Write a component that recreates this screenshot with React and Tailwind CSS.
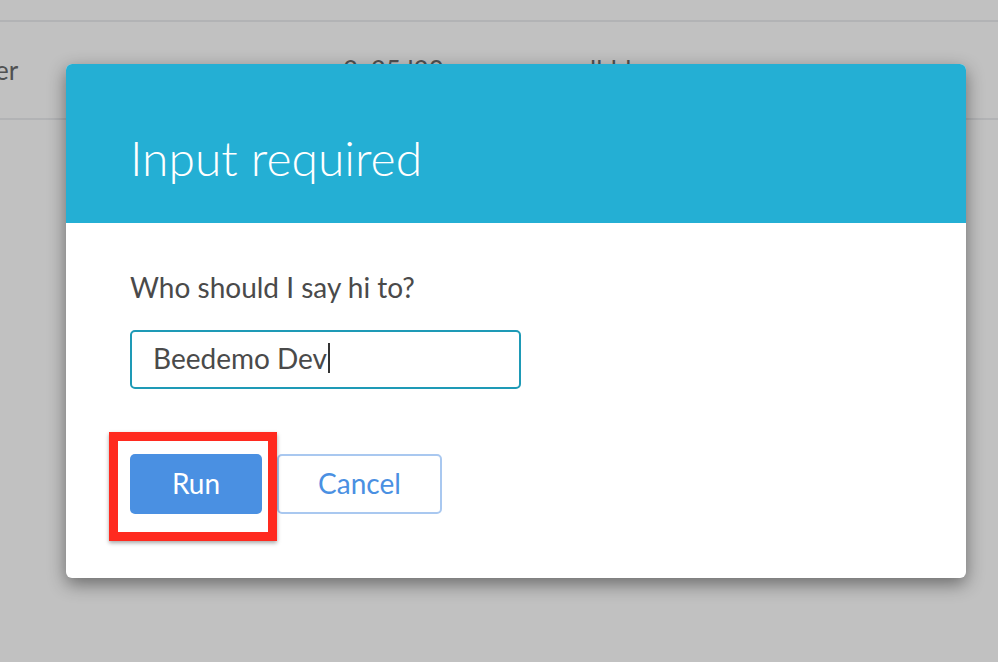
import React from "react";

export default function App() {
  return (
    <div className="relative h-[662px] w-[998px] overflow-hidden bg-[#c1c1c1] font-['Lato','Open_Sans',sans-serif] text-[#4a4a4a]">
      {/* background table */}
      <div className="pt-[20px]">
        <div className="h-[2px] bg-[#b2b3b5]" />
        <div className="flex h-[96px] items-center text-[26px] text-[#505152]">
          <span className="ml-[-18px] w-[361px] shrink-0">ver</span>
          <span className="w-[247px] shrink-0">2, 25 l20</span>
          <span>lldd</span>
        </div>
        <div className="h-[2px] bg-[#b2b3b5]" />
      </div>

      {/* modal */}
      <div className="absolute left-[66px] top-[64px] flex h-[514px] w-[900px] flex-col overflow-hidden rounded-[6px] bg-white shadow-[0_6px_18px_rgba(0,0,0,0.45)]">
        <div className="h-[159px] bg-[#24afd4] pl-[64px] pt-[70px]">
          <h1 className="text-[48px] font-light leading-none text-white">Input required</h1>
        </div>
        <div className="flex flex-col pl-[64px] pt-[48px]">
          <label className="text-[28px] leading-[32px] text-[#4a4a4a]">Who should I say hi to?</label>
          <div className="mt-[27px] flex h-[59px] w-[391px] items-center rounded-[5px] border-2 border-[#1e9ab6] px-[21px] pb-[3px] text-[28px] text-[#4a4a4a]">
            <span>Beedemo Dev</span>
            <span className="ml-[1px] h-[30px] w-[1.5px] bg-[#333]" />
          </div>
          <div className="mt-[65px] flex gap-[15px]">
            <button className="h-[60px] w-[132px] rounded-[5px] bg-[#4a90e2] pb-[3px] text-[28px] text-white">Run</button>
            <button className="h-[60px] w-[165px] rounded-[5px] border-2 border-[#a9c8f0] bg-white pb-[3px] text-[28px] text-[#4a90e2]">Cancel</button>
          </div>
        </div>
      </div>

      {/* annotation */}
      <div className="absolute left-[109px] top-[432px] h-[109px] w-[168px] border-[9px] border-[#ff2a1f] shadow-[0_2px_4px_rgba(0,0,0,0.35)]" />
    </div>
  );
}
